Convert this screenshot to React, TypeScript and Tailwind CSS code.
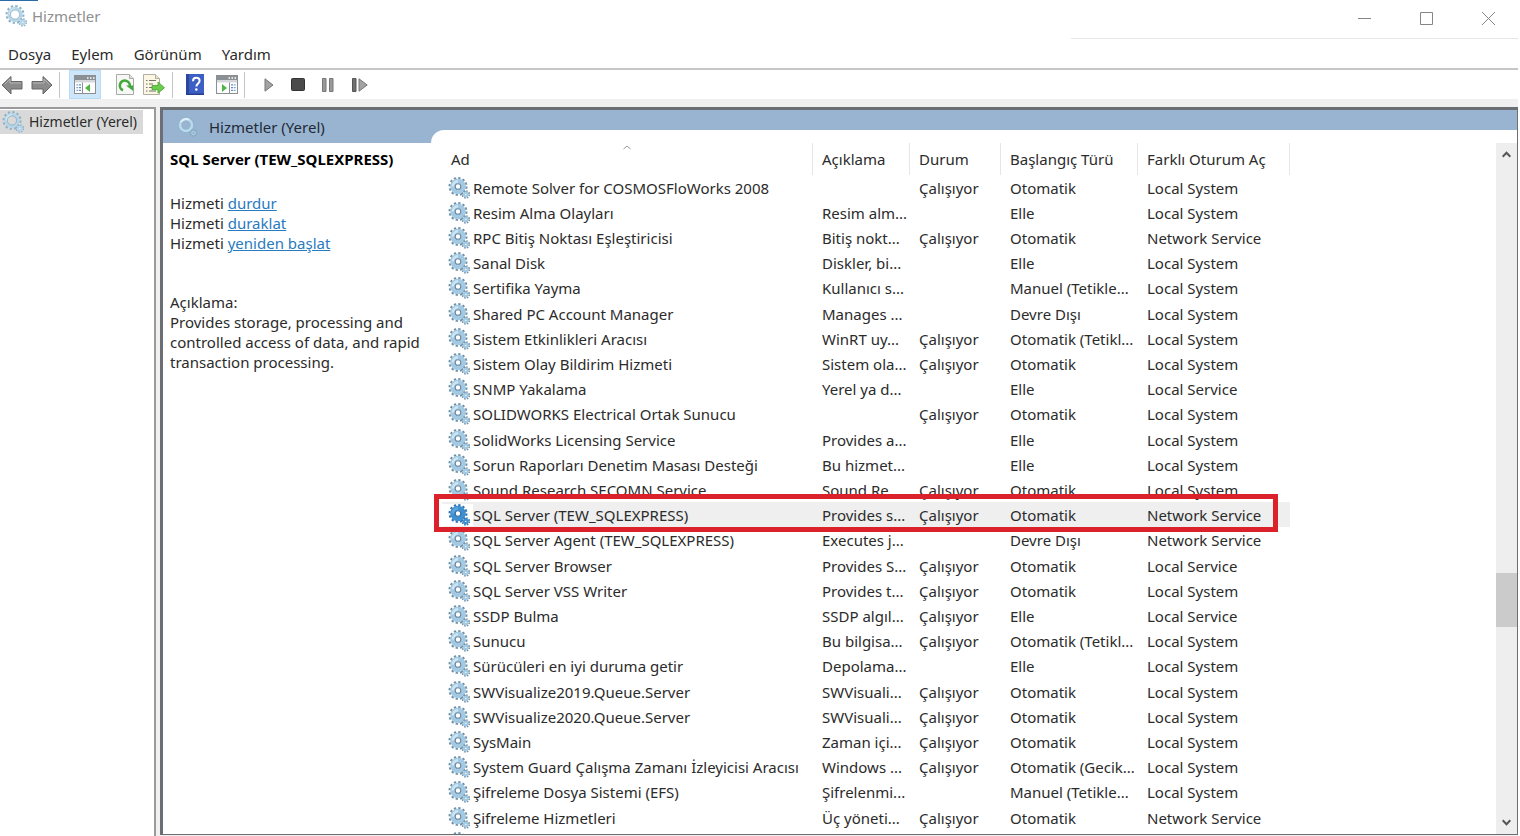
import type { ReactNode } from "react";

type Service = {
  name: string;
  description?: string;
  status?: string;
  startup: string;
  logOn: string;
  selected?: boolean;
};

const RUNNING = "Çalışıyor";

const services: Service[] = [
  { name: "Remote Solver for COSMOSFloWorks 2008", status: RUNNING, startup: "Otomatik", logOn: "Local System" },
  { name: "Resim Alma Olayları", description: "Resim alm...", startup: "Elle", logOn: "Local System" },
  { name: "RPC Bitiş Noktası Eşleştiricisi", description: "Bitiş nokt...", status: RUNNING, startup: "Otomatik", logOn: "Network Service" },
  { name: "Sanal Disk", description: "Diskler, bi...", startup: "Elle", logOn: "Local System" },
  { name: "Sertifika Yayma", description: "Kullanıcı s...", startup: "Manuel (Tetikle...", logOn: "Local System" },
  { name: "Shared PC Account Manager", description: "Manages ...", startup: "Devre Dışı", logOn: "Local System" },
  { name: "Sistem Etkinlikleri Aracısı", description: "WinRT uy...", status: RUNNING, startup: "Otomatik (Tetikl...", logOn: "Local System" },
  { name: "Sistem Olay Bildirim Hizmeti", description: "Sistem ola...", status: RUNNING, startup: "Otomatik", logOn: "Local System" },
  { name: "SNMP Yakalama", description: "Yerel ya d...", startup: "Elle", logOn: "Local Service" },
  { name: "SOLIDWORKS Electrical Ortak Sunucu", status: RUNNING, startup: "Otomatik", logOn: "Local System" },
  { name: "SolidWorks Licensing Service", description: "Provides a...", startup: "Elle", logOn: "Local System" },
  { name: "Sorun Raporları Denetim Masası Desteği", description: "Bu hizmet...", startup: "Elle", logOn: "Local System" },
  { name: "Sound Research SECOMN Service", description: "Sound Re...", status: RUNNING, startup: "Otomatik", logOn: "Local System" },
  { name: "SQL Server (TEW_SQLEXPRESS)", description: "Provides s...", status: RUNNING, startup: "Otomatik", logOn: "Network Service", selected: true },
  { name: "SQL Server Agent (TEW_SQLEXPRESS)", description: "Executes j...", startup: "Devre Dışı", logOn: "Network Service" },
  { name: "SQL Server Browser", description: "Provides S...", status: RUNNING, startup: "Otomatik", logOn: "Local Service" },
  { name: "SQL Server VSS Writer", description: "Provides t...", status: RUNNING, startup: "Otomatik", logOn: "Local System" },
  { name: "SSDP Bulma", description: "SSDP algıl...", status: RUNNING, startup: "Elle", logOn: "Local Service" },
  { name: "Sunucu", description: "Bu bilgisa...", status: RUNNING, startup: "Otomatik (Tetikl...", logOn: "Local System" },
  { name: "Sürücüleri en iyi duruma getir", description: "Depolama...", startup: "Elle", logOn: "Local System" },
  { name: "SWVisualize2019.Queue.Server", description: "SWVisuali...", status: RUNNING, startup: "Otomatik", logOn: "Local System" },
  { name: "SWVisualize2020.Queue.Server", description: "SWVisuali...", status: RUNNING, startup: "Otomatik", logOn: "Local System" },
  { name: "SysMain", description: "Zaman içi...", status: RUNNING, startup: "Otomatik", logOn: "Local System" },
  { name: "System Guard Çalışma Zamanı İzleyicisi Aracısı", description: "Windows ...", status: RUNNING, startup: "Otomatik (Gecik...", logOn: "Local System" },
  { name: "Şifreleme Dosya Sistemi (EFS)", description: "Şifrelenmi...", startup: "Manuel (Tetikle...", logOn: "Local System" },
  { name: "Şifreleme Hizmetleri", description: "Üç yöneti...", status: RUNNING, startup: "Otomatik", logOn: "Network Service" },
];

const gearColors = {
  normal: { teeth: "#6f8fa6", body: "#a3cae2", shine: "#cde6f4", hole: "#ffffff", rim: "#6886a0" },
  selected: { teeth: "#2f74b0", body: "#3f8fd0", shine: "#5ca6e0", hole: "#ffffff", rim: "#2b6ca6" },
  pale: { teeth: "#8fb0c5", body: "#b4d6e8", shine: "#cfe6f1", hole: "#f4f8fa", rim: "#7fa3ba" },
};

function GearIcon({ variant = "normal" }: { variant?: keyof typeof gearColors }) {
  const c = gearColors[variant];
  const thin = variant === "pale";
  return (
    <svg width="22" height="22" viewBox="0 0 22 22" fill="none" className="shrink-0" aria-hidden="true">
      <circle cx="10" cy="9.5" r="8.4" stroke={c.teeth} strokeWidth="2.2" strokeDasharray="2.3 2.1" />
      <circle cx="10" cy="9.5" r={thin ? 6.2 : 5.4} stroke={c.body} strokeWidth={thin ? 2.8 : 4.8} />
      <path d="M4.8 9.5a5.2 5.2 0 0 1 5.2-5.2" stroke={c.shine} strokeWidth="2.4" />
      <circle cx="10" cy="9.5" r={thin ? 4.6 : 2.8} fill={thin ? "none" : c.hole} stroke={c.rim} strokeWidth={thin ? 0.7 : 1.1} />
      <circle cx="17.8" cy="17.4" r="3.4" stroke={c.teeth} strokeWidth="1.8" strokeDasharray="1.5 1.17" />
      <circle cx="17.8" cy="17.4" r="1.8" fill={c.hole} stroke={c.body} strokeWidth="2.2" />
    </svg>
  );
}

/* Ring only, for the blue header band */
function HeaderGearIcon() {
  return (
    <svg width="22" height="22" viewBox="0 0 22 22" fill="none" className="shrink-0" aria-hidden="true">
      <circle cx="9" cy="9" r="8" stroke="#8fb3cb" strokeWidth="1.6" strokeDasharray="2.1 2.09" />
      <circle cx="9" cy="9" r="6" stroke="#b9dcec" strokeWidth="2.4" />
      <path d="M4 6a6 6 0 0 1 8-2.2" stroke="#dff0f7" strokeWidth="2" />
      <circle cx="16.5" cy="17" r="3" stroke="#7fa6bf" strokeWidth="1.6" strokeDasharray="1.2 1.1" />
      <circle cx="16.5" cy="17" r="1.8" stroke="#b0d0e2" strokeWidth="1" />
    </svg>
  );
}

function ArrowIcon({ flip = false }: { flip?: boolean }) {
  return (
    <svg width="22" height="20" viewBox="0 0 22 20" className={flip ? "-scale-x-100" : ""} aria-hidden="true">
      <path d="M1 10 10 1.5v5h11v7.5H10v5z" fill="#8b8b8b" stroke="#666" strokeLinejoin="round" />
      <path d="M3.5 9.5 9 4v4h11" fill="none" stroke="#b5b5b5" />
    </svg>
  );
}

function ConsoleIcon({ mirrored = false }: { mirrored?: boolean }) {
  return (
    <svg width="22" height="19" viewBox="0 0 22 19" className={mirrored ? "-scale-x-100" : ""} aria-hidden="true">
      <rect x="0.5" y="0.5" width="21" height="18" fill="#fff" stroke="#8a8f94" />
      <rect x="1" y="1" width="20" height="4" fill="#8b9095" />
      {mirrored ? (
        <path d="M2 3h1.5M5 3h1.5M8 3h1.5" stroke="#fff" strokeWidth="1.4" />
      ) : (
        <path d="M13 3h1.5M16 3h1.5M19 3h1.5" stroke="#fff" strokeWidth="1.4" />
      )}
      <rect x="1" y="5" width="20" height="2.5" fill="#d5d8da" />
      <path d="M8.5 7.5v11" stroke="#8a8f94" />
      <path d="M2.5 9.8h1.3m1 0h2.2M2.5 12.6h1.3m1 0h2.2M2.5 15.4h1.3m1 0h2.2" stroke="#5d8fc4" strokeWidth="1.3" />
      <path d="M16 9v8l-5-4z" fill="#4fb545" />
    </svg>
  );
}

function RefreshIcon() {
  return (
    <svg width="18" height="21" viewBox="0 0 18 21" fill="none" aria-hidden="true">
      <path d="M.5.5h13l4 4v16H.5z" fill="#f7f7f5" stroke="#a9aaa8" />
      <path d="M13.5.5v4h4" fill="#e2e2e0" stroke="#a9aaa8" />
      <path d="M7 16.2a5 5 0 1 1 6.8-4" stroke="#43a83c" strokeWidth="2.6" />
      <path d="M10 11.6h7.2v5.4z" fill="#43a83c" />
    </svg>
  );
}

function ExportIcon() {
  return (
    <svg width="22" height="21" viewBox="0 0 22 21" fill="none" aria-hidden="true">
      <path d="M.5.5h12l4 4v16H.5z" fill="#fbf7e4" stroke="#b3afa0" />
      <path d="M12.5.5v4h4" fill="#eae5d0" stroke="#b3afa0" />
      <path d="M3 6.5h1.5m1.5 0h7M3 10h1.5M6 10h4M3 13.5h1.5m1.5 0h4M3 17h1.5M6 17h7" stroke="#77756c" strokeWidth="1.2" />
      <path d="M9 11.5h6V8l6.5 5.7-6.5 5.5v-3.5H9z" fill="#6bcb4b" stroke="#44a535" strokeWidth="0.8" />
    </svg>
  );
}

function HelpIcon() {
  return (
    <svg width="18" height="21" viewBox="0 0 18 21" fill="none" aria-hidden="true">
      <rect width="18" height="21" fill="#3d5fc4" />
      <path d="M0 0h3v21H0z" fill="#2b469e" />
      <path d="M0 19.5h18V21H0z" fill="#26408f" />
      <path d="M7 7.2c0-2.2 1.3-3.4 3.3-3.4s3.3 1.2 3.3 3c0 2.6-3.2 2.7-3.2 5.6" stroke="#fff" strokeWidth="2" />
      <circle cx="10.3" cy="15.5" r="1.3" fill="#fff" />
    </svg>
  );
}

function ToolButton({ label, className = "", children }: { label: string; className?: string; children: ReactNode }) {
  return (
    <button type="button" aria-label={label} className={`flex h-7 w-6 shrink-0 items-center justify-center ${className}`}>
      {children}
    </button>
  );
}

function Separator({ className }: { className: string }) {
  return <div className={`h-[26px] w-px shrink-0 bg-[#c4c4c4] ${className}`} />;
}

function Toolbar() {
  return (
    <div className="flex h-[29px] shrink-0 items-center bg-white">
      <ToolButton label="Geri"><ArrowIcon /></ToolButton>
      <ToolButton label="İleri" className="ml-1.5"><ArrowIcon flip /></ToolButton>
      <Separator className="ml-[5px]" />
      <button
        type="button"
        aria-label="Konsol ağacı"
        className="ml-[9px] flex h-[29px] w-8 shrink-0 items-center justify-center border border-[#b9dcf6] bg-[#cde6f9]"
      >
        <ConsoleIcon />
      </button>
      <ToolButton label="Yenile" className="ml-3"><RefreshIcon /></ToolButton>
      <ToolButton label="Listeyi ver" className="ml-[5px]"><ExportIcon /></ToolButton>
      <Separator className="ml-1.5" />
      <ToolButton label="Yardım" className="ml-2.5"><HelpIcon /></ToolButton>
      <ToolButton label="Eylem bölmesi" className="ml-2"><ConsoleIcon mirrored /></ToolButton>
      <Separator className="ml-[5px]" />
      <ToolButton label="Başlat" className="ml-3">
        <svg width="10" height="14" viewBox="0 0 10 14" aria-hidden="true">
          <path d="M1 .8 9 7l-8 6.2z" fill="#a3a3a3" stroke="#777" />
        </svg>
      </ToolButton>
      <ToolButton label="Durdur" className="ml-[5px]">
        <svg width="14" height="13" viewBox="0 0 14 13" aria-hidden="true">
          <rect x="0.5" y="0.5" width="13" height="12" rx="1" fill="#4b4b4b" stroke="#333" />
        </svg>
      </ToolButton>
      <ToolButton label="Duraklat" className="ml-1.5">
        <svg width="12" height="14" viewBox="0 0 12 14" aria-hidden="true">
          <path d="M.5.5h3.5v13H.5zM7.5.5H11v13H7.5z" fill="#9a9a9a" stroke="#777" />
        </svg>
      </ToolButton>
      <ToolButton label="Yeniden başlat" className="ml-2">
        <svg width="16" height="14" viewBox="0 0 16 14" aria-hidden="true">
          <path d="M.5.5H4v13H.5z" fill="#707070" stroke="#555" />
          <path d="M7 .8 15.2 7 7 13.2z" fill="#a3a3a3" stroke="#777" />
        </svg>
      </ToolButton>
    </div>
  );
}

function TitleBar() {
  return (
    <header className="flex h-8 shrink-0 items-center justify-between pr-3.5">
      <div className="flex items-center gap-[5px] pl-[5px] text-[#8f8f8f]">
        <GearIcon variant="pale" />
        <h1>Hizmetler</h1>
      </div>
      <div className="flex gap-8 pt-1 text-[#858585]">
        <button type="button" aria-label="Simge durumuna küçült" className="w-[30px] pl-2">
          <svg width="13" height="13" viewBox="0 0 13 13" stroke="currentColor" aria-hidden="true"><path d="M0 6.5h13" /></svg>
        </button>
        <button type="button" aria-label="Ekranı kapla" className="w-[30px] pl-2">
          <svg width="13" height="13" viewBox="0 0 13 13" stroke="currentColor" fill="none" aria-hidden="true"><path d="M.5.5h12v12H.5z" /></svg>
        </button>
        <button type="button" aria-label="Kapat" className="w-[30px] pl-2">
          <svg width="13" height="13" viewBox="0 0 13 13" stroke="currentColor" aria-hidden="true"><path d="m0 0 13 13M13 0 0 13" /></svg>
        </button>
      </div>
    </header>
  );
}

function DetailPanel() {
  return (
    <section className="w-[267px] shrink-0 pl-[7px] pt-1.5 leading-5">
      <h2 className="whitespace-nowrap font-bold text-black">SQL Server (TEW_SQLEXPRESS)</h2>
      <ul className="mt-6">
        {["durdur", "duraklat", "yeniden başlat"].map((action) => (
          <li key={action}>
            Hizmeti <a href="#" className="text-[#2a7ac0] underline">{action}</a>
          </li>
        ))}
      </ul>
      <p className="mt-[39px]">Açıklama:</p>
      <p>Provides storage, processing and controlled access of data, and rapid transaction processing.</p>
    </section>
  );
}

function ServiceTable() {
  const headCell = "border-r border-[#e6e6e6] pl-[9px] text-left font-normal";
  const cell = "whitespace-nowrap pl-[9px]";
  return (
    <table className="w-[848px] table-fixed border-separate border-spacing-0">
      <colgroup>
        <col className="w-[371px]" />
        <col className="w-[97px]" />
        <col className="w-[91px]" />
        <col className="w-[137px]" />
        <col className="w-[152px]" />
      </colgroup>
      <thead>
        <tr className="h-8">
          <th className={`relative ${headCell}`}>
            Ad
            <svg width="8" height="5" viewBox="0 0 8 5" fill="none" stroke="#999" className="absolute top-0.5 left-1/2 -translate-x-1/2" aria-hidden="true">
              <path d="m.5 4 3.5-3 3.5 3" />
            </svg>
          </th>
          <th className={headCell}>Açıklama</th>
          <th className={headCell}>Durum</th>
          <th className={headCell}>Başlangıç Türü</th>
          <th className={headCell}>Farklı Oturum Aç</th>
        </tr>
      </thead>
      <tbody>
        {services.map((s) => (
          <tr key={s.name} className={`h-[25px] nth-[5n]:h-[26px] ${s.selected ? "bg-[#efefef]" : ""}`}>
            <td className={s.selected ? "relative" : ""}>
              <div className="flex h-[25px] items-center whitespace-nowrap">
                <span className="flex w-[31px] shrink-0 bg-white pl-1.5">
                  <GearIcon variant={s.selected ? "selected" : "normal"} />
                </span>
                {s.name}
              </div>
              {s.selected && (
                <div className="pointer-events-none absolute -top-2 -left-2 z-10 h-[38px] w-[844px] border-5 border-[#db2129]" />
              )}
            </td>
            <td className={cell}>{s.description}</td>
            <td className={cell}>{s.status}</td>
            <td className={cell}>{s.startup}</td>
            <td className={cell}>{s.logOn}</td>
          </tr>
        ))}
        <tr className="h-[25px]">
          <td colSpan={5} className="pl-1.5"><GearIcon /></td>
        </tr>
      </tbody>
    </table>
  );
}

function ScrollBar() {
  return (
    <div className="flex w-[21px] shrink-0 flex-col items-center justify-between bg-[#eeeeee] py-2">
      <button type="button" aria-label="Yukarı kaydır">
        <svg width="9" height="7" viewBox="0 0 9 7" fill="none" stroke="#555" strokeWidth="2" aria-hidden="true"><path d="m.7 5.7 3.8-4 3.8 4" /></svg>
      </button>
      <div className="mt-[415px] h-[54px] w-full bg-[#cbcbcb]" />
      <button type="button" aria-label="Aşağı kaydır" className="mt-auto">
        <svg width="9" height="7" viewBox="0 0 9 7" fill="none" stroke="#555" strokeWidth="2" aria-hidden="true"><path d="m.7 1.3 3.8 4 3.8-4" /></svg>
      </button>
    </div>
  );
}

export default function App() {
  return (
    <div className="relative flex h-screen flex-col overflow-hidden bg-white pr-0.5 font-['Noto_Sans',sans-serif] text-[15px] leading-5 text-[#2b2b2b]">
      <div className="absolute top-0 left-0 h-px w-[38px] bg-[#2b6ca8]" />
      <TitleBar />
      <div className="mt-1.5 h-px w-[447px] shrink-0 self-end bg-[#e6e6e6]" />
      <nav className="flex h-[31px] shrink-0 items-center gap-5 border-b-2 border-[#c6c6c6] pl-2">
        {["Dosya", "Eylem", "Görünüm", "Yardım"].map((item) => (
          <button key={item} type="button">{item}</button>
        ))}
      </nav>
      <Toolbar />
      <div className="flex min-h-0 flex-1 bg-[#f0f0f0] pt-2">
        <aside className="w-[156px] shrink-0 border-t-2 border-r-2 border-[#9a9a9a] bg-white">
          <button type="button" className="mt-px flex h-6 w-[143px] items-center gap-[5px] bg-[#d9d9d9] pl-0.5 text-sm whitespace-nowrap">
            <GearIcon variant="pale" />
            Hizmetler (Yerel)
          </button>
        </aside>
        <main className="mb-px ml-1 flex min-w-0 flex-1 flex-col border-t-3 border-r border-b border-l-3 border-[#6b6f73] bg-white">
          <div className="flex h-[33px] shrink-0 items-center bg-[#99b4d1] text-[#1f2a36]">
            <div className="flex w-[268px] items-center gap-2.5 pl-3.5">
              <HeaderGearIcon />
              Hizmetler (Yerel)
            </div>
            <div className="h-[13px] flex-1 self-end rounded-tl-[13px] bg-white" />
          </div>
          <div className="flex min-h-0 flex-1">
            <DetailPanel />
            <div className="min-w-0 flex-1 overflow-hidden pl-3">
              <ServiceTable />
            </div>
            <ScrollBar />
          </div>
        </main>
      </div>
    </div>
  );
}
